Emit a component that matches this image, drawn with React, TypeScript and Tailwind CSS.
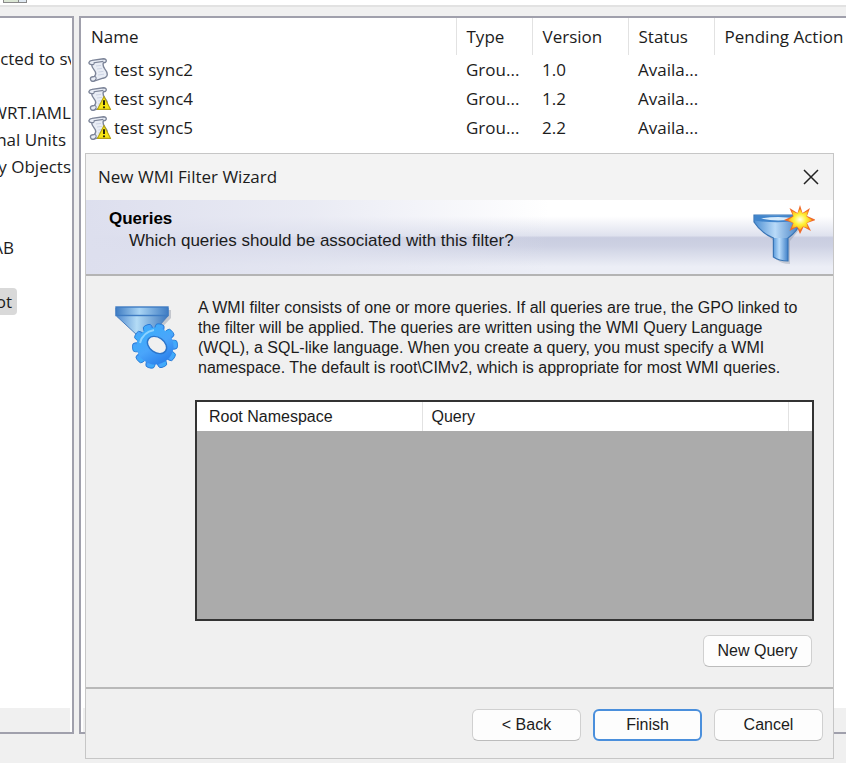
import type { ReactNode } from 'react';

const uiFont = "font-['Open_Sans','Noto_Sans',sans-serif]";
const dialogFont = "font-['Liberation_Sans',Arial,sans-serif]";

// The tree is scrolled sideways, so each label is cut at its left end
const treeRows = [
    { label: '', width: 'w-[71px]' },
    { label: 'cted to sv', width: 'w-[76px]' },
    { label: '', width: 'w-[71px]' },
    { label: 'WRT.IAML', width: 'w-[71px]' },
    { label: 'nal Units', width: 'w-[66px]' },
    { label: 'y Objects', width: 'w-[71px]' },
    { label: '', width: 'w-[71px]' },
    { label: '', width: 'w-[71px]' },
    { label: 'AB', width: 'w-[14px]' },
    { label: '', width: 'w-[71px]' },
    { label: 'ot', width: 'w-[17px]', selected: true },
];

const filters = [
    { name: 'test sync2', type: 'Grou...', version: '1.0', status: 'Availa...', warning: false },
    { name: 'test sync4', type: 'Grou...', version: '1.2', status: 'Availa...', warning: true },
    { name: 'test sync5', type: 'Grou...', version: '2.2', status: 'Availa...', warning: true },
];

function ScriptIcon({ warning }: { warning: boolean }) {
    return (
        <svg className="h-6 w-6 shrink-0" viewBox="0 0 24 24" fill="none" aria-hidden="true">
            <path
                d="M4 2.4 L15.5 0.8 Q18.6 0.8 18.2 3.2 Q17.6 5 15.4 4.8 Q14.4 7.4 16.6 10.6 Q20.6 15.6 18.6 18.4 Q17.4 20 15 20.2 L6 23.2 Q2.6 23.6 2.4 20.8 Q2.6 18.8 5 18.8 L6.4 18.4 Q9 15.5 6.4 12.4 Q3.6 9.2 3.6 6.6 Q0.8 6.4 1 4.4 Q1.6 2.6 4 2.4 Z"
                fill="#e9edf5"
                stroke="#7c8498"
                strokeWidth="1.4"
                strokeLinejoin="round"
            />
            <path d="M3.6 6.6 Q6.6 6.8 6.2 4.6 L15.4 3.4 M6.4 18.4 Q8.6 18.8 8 21 Q7.4 22.6 6 23" stroke="#7c8498" strokeWidth="1.1" />
            <path d="M8 8 L13 7.4 M9 11 L14 10.4 M10.4 14 L15.4 13.4 M10 17 L16 16.2" stroke="#cdd4e4" strokeWidth="1" />
            {warning && (
                <>
                    <path d="M16 9.6 L22.6 22.4 H9.4 Z" fill="#f8e713" stroke="#b5a316" strokeWidth="1.1" strokeLinejoin="round" />
                    <path d="M16 13.2 V18" stroke="#27240a" strokeWidth="2" />
                    <circle cx="16" cy="20.3" r="1.1" fill="#27240a" />
                </>
            )}
        </svg>
    );
}

function NewFilterIcon() {
    return (
        <svg className="h-16 w-16" viewBox="0 0 64 64" aria-hidden="true">
            <defs>
                <linearGradient id="newFunnel" x1="0" y1="0" x2="1" y2="0">
                    <stop offset="0" stopColor="#4b8ed2" />
                    <stop offset="0.45" stopColor="#b9daf8" />
                    <stop offset="1" stopColor="#3a78bf" />
                </linearGradient>
                <linearGradient id="newSpout" x1="0" y1="0" x2="1" y2="0">
                    <stop offset="0" stopColor="#5b9bdc" />
                    <stop offset="0.4" stopColor="#b9dcfb" />
                    <stop offset="1" stopColor="#3f80c8" />
                </linearGradient>
                <radialGradient id="spark">
                    <stop offset="0" stopColor="#fffff0" />
                    <stop offset="0.5" stopColor="#fff23a" />
                    <stop offset="1" stopColor="#fbb414" />
                </radialGradient>
            </defs>
            <path d="M5 14 H52 V21 L39 37 V60 Q30 60 25 55 V39 L5 21 Z" fill="#5f6a80" opacity="0.25" />
            <path d="M3 11 H50 V18 Q46 28 37 34 V40 H22.4 V34 Q10 29 3 18 Z" fill="url(#newFunnel)" />
            <path d="M22.4 34 H37 V57 Q28 57 22.4 53 Z" fill="url(#newSpout)" />
            <path d="M3 11 H50 V18 Q46 28 37 34 V57 Q28 57 22.4 53 V34 Q10 29 3 18 Z" fill="none" stroke="#3975b6" strokeWidth="1.2" />
            <path d="M3.6 11.6 H49.4 V16.5 Q26 20 3.6 16.5 Z" fill="#4185cc" />
            <path d="M10 14.5 Q27 11.5 45 14.5 Q27 18.5 10 14.5 Z" fill="#d8ecfc" />
            <path
                d="M49 1 L51.5 9 L59 4 L56 12 L65 16 L56 19 L60 27 L52.5 23 L49 30 L46 23 L38.5 27 L42 19 L33 16 L42 12 L38.5 4 L46.5 9 Z"
                fill="#f06a2a"
            />
            <path
                d="M49 5 L51.5 9.5 L57 7 L55.5 12.5 L61 16 L55.5 19 L57 24 L52 22.5 L49 26 L46 22.5 L41 24 L42.5 19 L37 16 L42.5 12.5 L41 7 L46.5 9.5 Z"
                fill="url(#spark)"
            />
        </svg>
    );
}

function FilterGearIcon() {
    const teeth = [0, 36, 72, 108, 144, 180, 216, 252, 288, 324];
    return (
        <svg className="h-[66px] w-[68px]" viewBox="0 0 68 66" aria-hidden="true">
            <defs>
                <linearGradient id="gearFunnel" x1="0" y1="0" x2="1" y2="0">
                    <stop offset="0" stopColor="#4e88cf" />
                    <stop offset="0.4" stopColor="#b4dcf6" />
                    <stop offset="1" stopColor="#3c76bd" />
                </linearGradient>
                <linearGradient id="gearRim" x1="0" y1="0" x2="1" y2="0">
                    <stop offset="0" stopColor="#3f7cc3" />
                    <stop offset="0.45" stopColor="#a9d4f4" />
                    <stop offset="1" stopColor="#3f7cc3" />
                </linearGradient>
                <linearGradient id="gearBody" x1="0" y1="0" x2="1" y2="1">
                    <stop offset="0" stopColor="#37b0fa" />
                    <stop offset="0.5" stopColor="#4aa5fb" />
                    <stop offset="1" stopColor="#1f72e4" />
                </linearGradient>
            </defs>
            <path d="M4 6 H57 V14 L38 34 H28 L6 14 Z" fill="#5f6a80" opacity="0.3" />
            <path d="M2 4 H54 V12 L36 32 V36 H24 V32 L2.4 12 Z" fill="url(#gearFunnel)" stroke="#4a7fbe" strokeWidth="1" />
            <rect x="2" y="3" width="52" height="8.5" fill="url(#gearRim)" stroke="#3f7cc3" strokeWidth="1.4" />
            <g transform="rotate(14 41 42)">
                {teeth.map((angle) => (
                    <rect
                        key={angle}
                        x="36.5"
                        y="19.5"
                        width="9"
                        height="12"
                        rx="3"
                        fill="url(#gearBody)"
                        stroke="#2273d2"
                        strokeWidth="0.8"
                        transform={`rotate(${angle} 41 42)`}
                    />
                ))}
                <circle cx="41" cy="42" r="18.5" fill="url(#gearBody)" />
            </g>
            <ellipse cx="43" cy="41" rx="10.5" ry="7.5" fill="#f0f0f0" stroke="#2b75cb" strokeWidth="1.4" transform="rotate(35 43 41)" />
            <path d="M26 39 Q29 28 40 26" fill="none" stroke="#8bd2ff" strokeWidth="2" />
        </svg>
    );
}

function WizardButton({ children, primary = false }: { children: ReactNode; primary?: boolean }) {
    return (
        <button
            type="button"
            className={`h-8 w-[109px] rounded-md bg-[#fdfdfd] text-base ${
                primary ? 'border-2 border-[#4a8fdc]' : 'border border-[#d0d0d0] border-b-[#bcbcbc]'
            }`}
        >
            {children}
        </button>
    );
}

function WizardDialog() {
    return (
        <section
            role="dialog"
            aria-labelledby="wizard-title"
            className={`absolute top-[153px] right-3 left-[85px] border border-[#c6c6c6] bg-[#f0f0f0] text-base text-[#1c1c1c] ${dialogFont}`}
        >
            <header className={`flex h-[46px] items-center justify-between bg-[#f3f3f3] pr-[10px] pl-3 ${uiFont}`}>
                <h1 id="wizard-title" className="text-[17px]">New WMI Filter Wizard</h1>
                <button type="button" aria-label="Close" className="p-1">
                    <svg className="h-4 w-4" viewBox="0 0 16 16" stroke="#222" strokeWidth="1.5" aria-hidden="true">
                        <path d="M1 1 L15 15 M15 1 L1 15" />
                    </svg>
                </button>
            </header>

            {/* Banner */}
            <div className="h-[76px] border-b-2 border-[#b4b4b4] bg-[linear-gradient(to_bottom,#ffffff_22%,#dfe2ee_48%,#c9cde0_51%,#cdd1e3_62%,#eceef6_90%)]">
                <div className="flex h-full items-start justify-between bg-[linear-gradient(to_right,#dddfee,#e0e2efb0_30%,#e0e2ef00_62%)] pr-[18px] pl-[23px]">
                    <div className="pt-2 text-[17px] leading-[22px]">
                        <h2 className="font-bold text-black">Queries</h2>
                        <p className="pl-5">Which queries should be associated with this filter?</p>
                    </div>
                    <div className="pt-1">
                        <NewFilterIcon />
                    </div>
                </div>
            </div>

            <div className="flex pt-[22px] pr-[19px] pl-7">
                <div className="w-[81px] shrink-0 pt-1.5">
                    <FilterGearIcon />
                </div>
                <div className="min-w-0 flex-1">
                    <p className="pl-[3px] leading-5">
                        A WMI filter consists of one or more queries. If all queries are true, the GPO linked to
                        <br />
                        the filter will be applied. The queries are written using the WMI Query Language
                        <br />
                        (WQL), a SQL-like language. When you create a query, you must specify a WMI
                        <br />
                        namespace. The default is root\CIMv2, which is appropriate for most WMI queries.
                    </p>
                    <div className="mt-[22px] h-[221px] border-2 border-[#333] bg-[#ababab]">
                        <table className="w-full table-fixed text-left">
                            <thead>
                                <tr className="h-[29px] bg-white">
                                    <th className="w-[225px] border-r border-[#e2e2e2] pl-3 font-normal">Root Namespace</th>
                                    <th className="border-r border-[#e2e2e2] pl-[9px] font-normal">Query</th>
                                    <th className="w-6" aria-label="Spacer" />
                                </tr>
                            </thead>
                        </table>
                    </div>
                    <div className="mt-3.5 flex justify-end pr-0.5">
                        <WizardButton>New Query</WizardButton>
                    </div>
                </div>
            </div>

            <footer className="mt-5 flex justify-end gap-3 border-t-2 border-[#b9b9b9] pt-5 pr-[10px] pb-[17px]">
                <WizardButton>&lt; Back</WizardButton>
                <WizardButton primary>Finish</WizardButton>
                <WizardButton>Cancel</WizardButton>
            </footer>
        </section>
    );
}

export default function App() {
    return (
        <div className={`relative flex h-screen flex-col overflow-hidden bg-[#f0f0f0] text-[17px] text-[#1c1c1c] ${uiFont}`}>
            {/* Lower edge of the toolbar */}
            <div className="h-[7px] shrink-0 border-b-2 border-[#e2e2e2] bg-white pl-[3px]">
                <div className="flex h-[3px] w-6 border-x border-b border-[#8a8a8a] bg-[#dbe6d4]">
                    <div className="ml-auto w-2 border-l border-[#8a8a8a] bg-[#dfe9f2]" />
                </div>
            </div>

            <main className="mt-[9px] mb-[29px] flex min-h-0 flex-1 gap-[5px]">
                <nav className="flex w-[74px] shrink-0 flex-col justify-between overflow-hidden border-y-2 border-r-2 border-[#a0a0ac] bg-white">
                    <ul className="mr-px overflow-hidden">
                        {treeRows.map((row, idx) => (
                            <li key={idx} className="flex h-[27px] items-center">
                                <span
                                    className={`flex h-[27px] shrink-0 items-center justify-end overflow-hidden whitespace-nowrap ${row.width} ${
                                        row.selected ? 'rounded-r-sm bg-[#d9d9d9] pr-[5px]' : ''
                                    }`}
                                >
                                    {row.label}
                                </span>
                            </li>
                        ))}
                    </ul>
                    <div className="mr-0.5 h-6 bg-[#f0f0f0]" />
                </nav>

                <div className="flex min-w-0 flex-1 flex-col justify-between overflow-hidden border-y-2 border-l-2 border-[#a0a0ac] bg-white">
                    <table className="w-full table-fixed text-left whitespace-nowrap">
                        <thead>
                            <tr className="h-[37px]">
                                <th className="w-[375px] border-r border-[#e2e2e2] pl-[10px] font-normal">Name</th>
                                <th className="w-[76px] border-r border-[#e2e2e2] pl-[10px] font-normal">Type</th>
                                <th className="w-24 border-r border-[#e2e2e2] pl-[10px] font-normal">Version</th>
                                <th className="w-[86px] border-r border-[#e2e2e2] pl-[10px] font-normal">Status</th>
                                <th className="pl-[10px] font-normal">Pending Action</th>
                            </tr>
                        </thead>
                        <tbody>
                            {filters.map((filter) => (
                                <tr key={filter.name} className="h-[29px]">
                                    <td className="pl-[7px]">
                                        <div className="flex items-center gap-0.5">
                                            <ScriptIcon warning={filter.warning} />
                                            {filter.name}
                                        </div>
                                    </td>
                                    <td className="pl-[10px]">{filter.type}</td>
                                    <td className="pl-[10px]">{filter.version}</td>
                                    <td className="pl-[10px]">{filter.status}</td>
                                    <td />
                                </tr>
                            ))}
                        </tbody>
                    </table>
                    <div className="ml-0.5 h-6 bg-[#f0f0f0]" />
                </div>
            </main>

            <WizardDialog />
        </div>
    );
}
